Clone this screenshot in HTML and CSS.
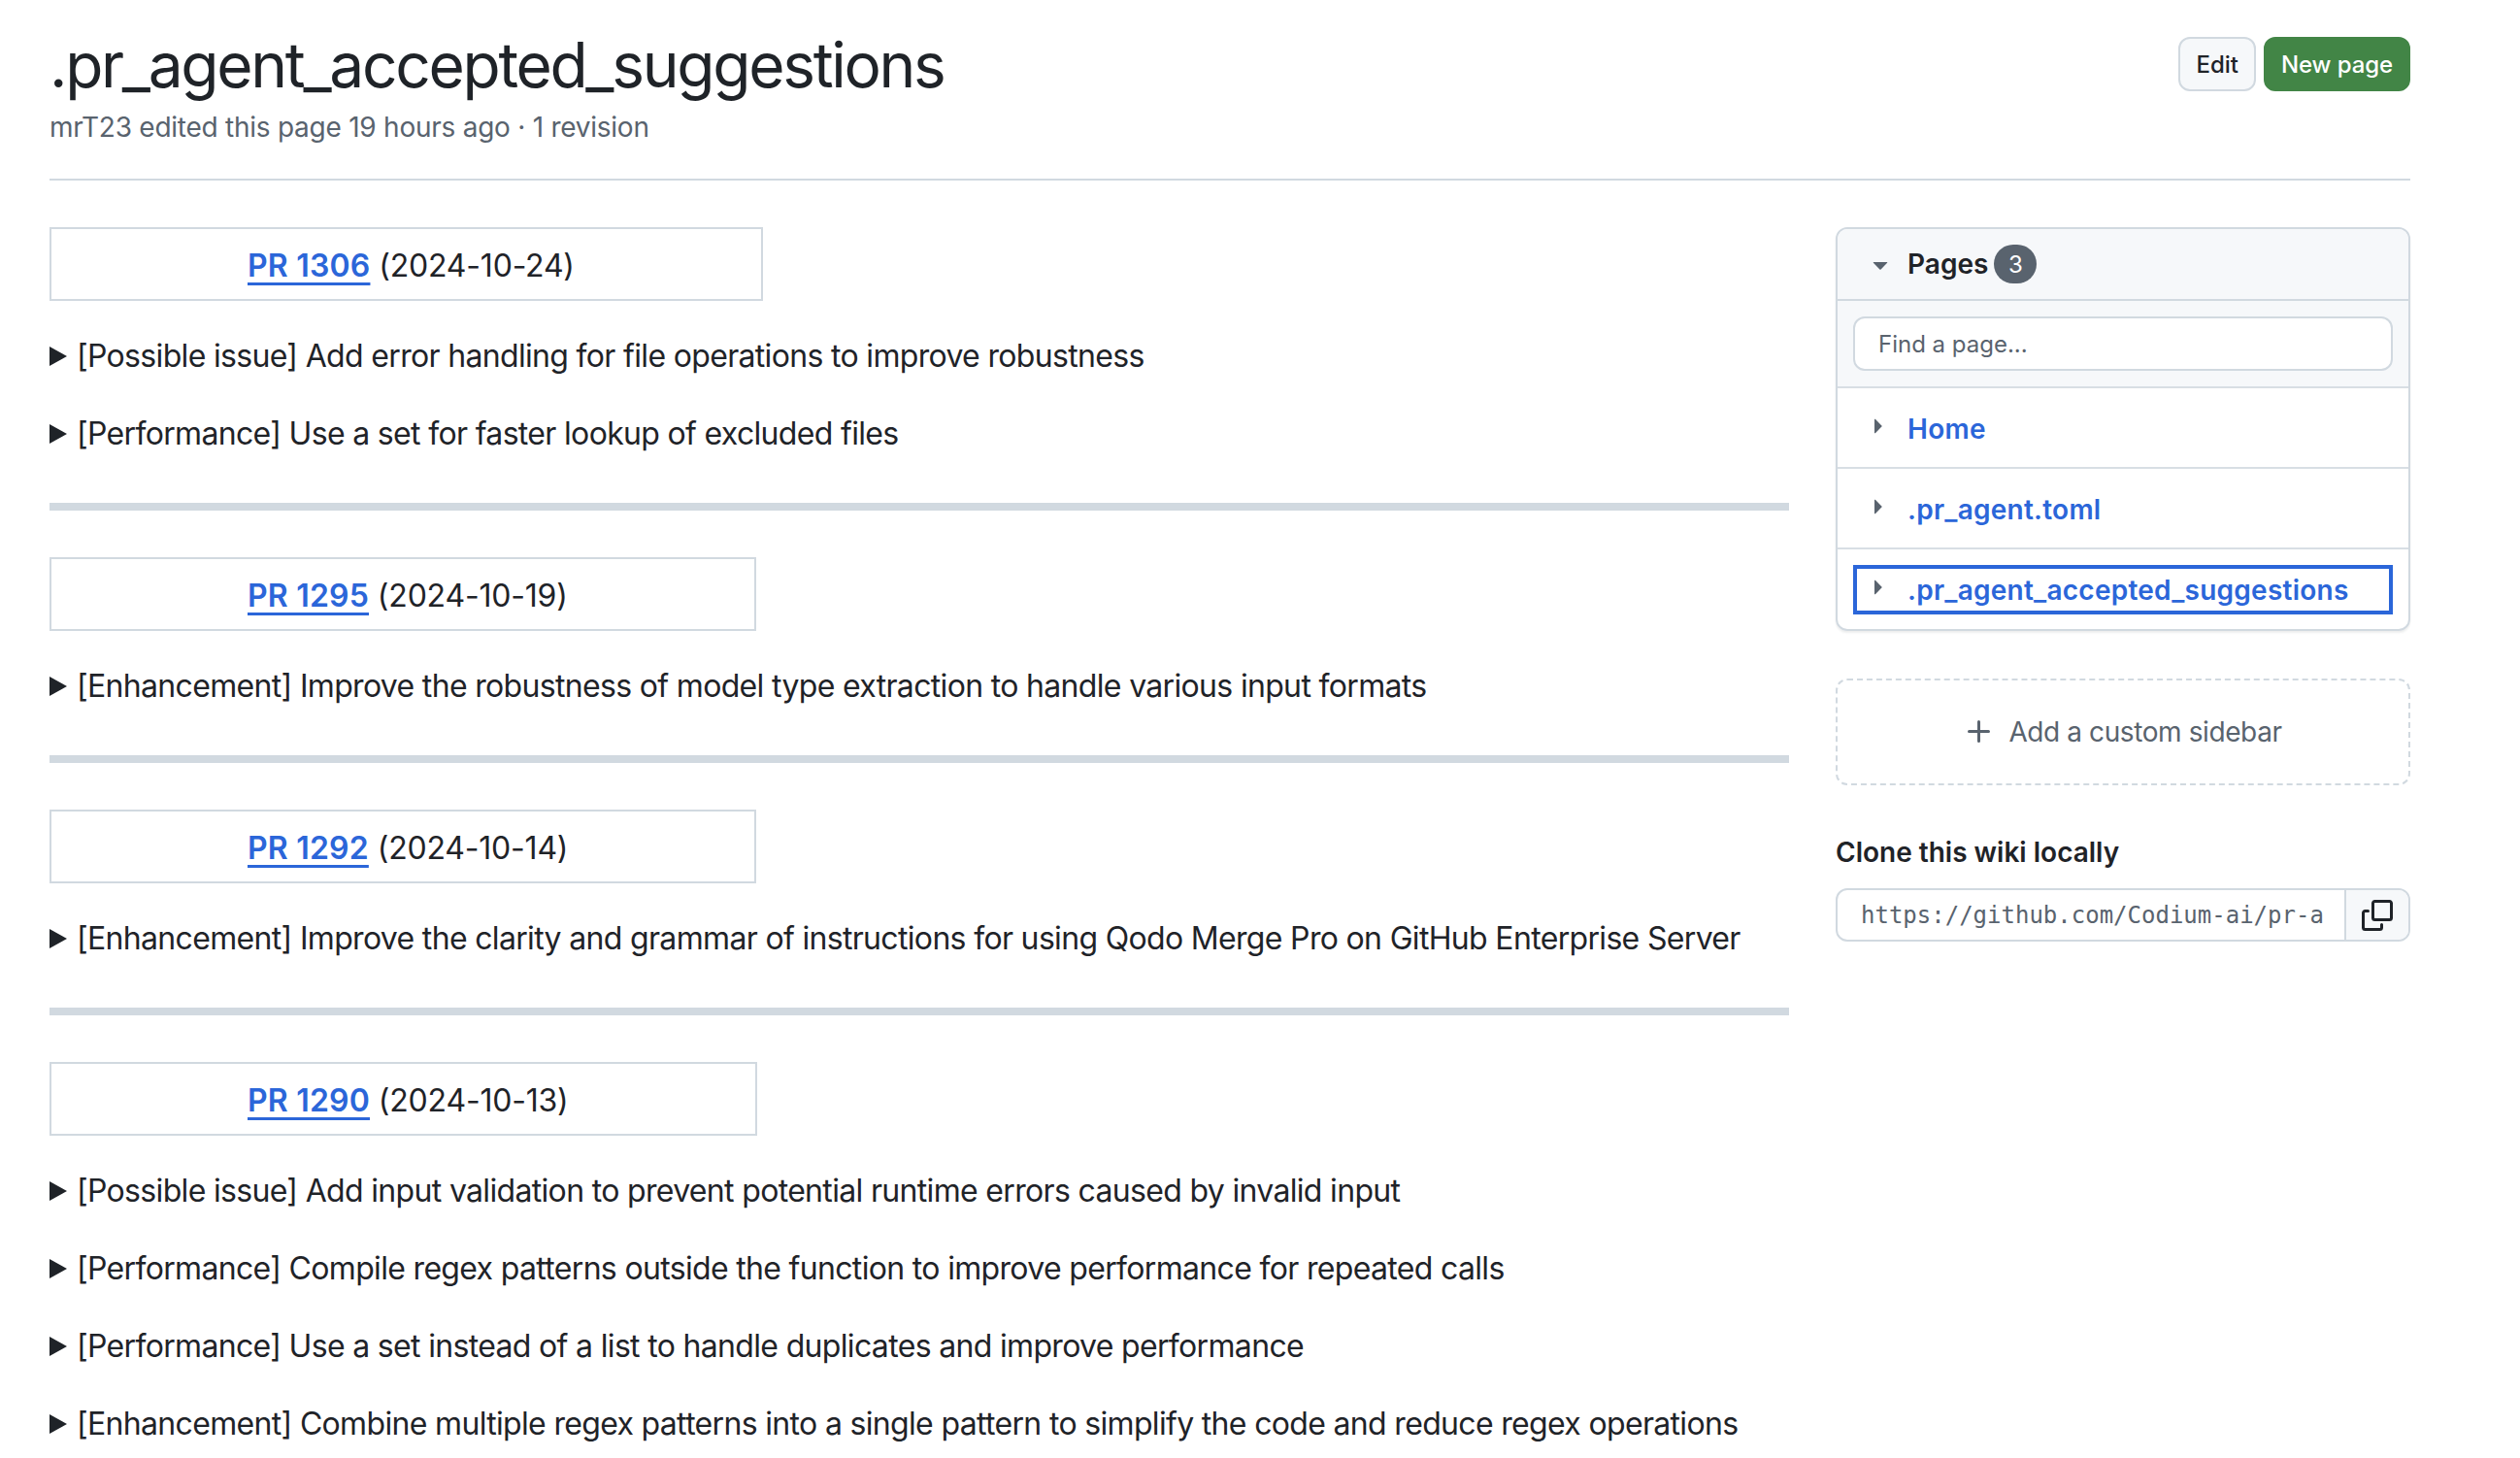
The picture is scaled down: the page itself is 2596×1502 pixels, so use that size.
FILE: index.html
```html
<!DOCTYPE html>
<html lang="en">
<head>
<meta charset="utf-8">
<title>.pr_agent_accepted_suggestions</title>
<link rel="stylesheet" href="styles.css">
</head>
<body>
<div class="page">
  <header class="head">
    <div class="head-text">
      <h1 class="title">.pr_agent_accepted_suggestions</h1>
      <div class="meta">mrT23 edited this page 19 hours ago · 1 revision</div>
    </div>
    <div class="actions">
      <a class="btn">Edit</a>
      <a class="btn btn-green">New page</a>
    </div>
  </header>
  <div class="layout">
    <main class="content">
      <div class="prbox"><a class="prlink">PR 1306</a> (2024-10-24)</div>
      <details class="item"><summary>[Possible issue] Add error handling for file operations to improve robustness</summary></details>
      <details class="item"><summary>[Performance] Use a set for faster lookup of excluded files</summary></details>
      <hr class="rule">
      <div class="prbox"><a class="prlink">PR 1295</a> (2024-10-19)</div>
      <details class="item"><summary>[Enhancement] Improve the robustness of model type extraction to handle various input formats</summary></details>
      <hr class="rule">
      <div class="prbox"><a class="prlink">PR 1292</a> (2024-10-14)</div>
      <details class="item"><summary>[Enhancement] Improve the clarity and grammar of instructions for using Qodo Merge Pro on GitHub Enterprise Server</summary></details>
      <hr class="rule">
      <div class="prbox"><a class="prlink">PR 1290</a> (2024-10-13)</div>
      <details class="item"><summary>[Possible issue] Add input validation to prevent potential runtime errors caused by invalid input</summary></details>
      <details class="item"><summary>[Performance] Compile regex patterns outside the function to improve performance for repeated calls</summary></details>
      <details class="item"><summary>[Performance] Use a set instead of a list to handle duplicates and improve performance</summary></details>
      <details class="item"><summary>[Enhancement] Combine multiple regex patterns into a single pattern to simplify the code and reduce regex operations</summary></details>
    </main>
    <aside class="side">
      <section class="card">
        <div class="card-head">
          <svg class="tri-down" viewBox="0 0 16 16"><path d="m4.427 7.427 3.396 3.396a.25.25 0 0 0 .354 0l3.396-3.396A.25.25 0 0 0 11.396 7H4.604a.25.25 0 0 0-.177.427Z"/></svg>
          <span class="card-title">Pages</span>
          <span class="badge">3</span>
        </div>
        <div class="filter"><div class="find">Find a page...</div></div>
        <div class="row">
          <svg class="tri" viewBox="0 0 16 16"><path d="m6.427 4.427 3.396 3.396a.25.25 0 0 1 0 .354l-3.396 3.396A.25.25 0 0 1 6 11.396V4.604a.25.25 0 0 1 .427-.177Z"/></svg>
          <a class="row-link">Home</a>
        </div>
        <div class="row">
          <svg class="tri" viewBox="0 0 16 16"><path d="m6.427 4.427 3.396 3.396a.25.25 0 0 1 0 .354l-3.396 3.396A.25.25 0 0 1 6 11.396V4.604a.25.25 0 0 1 .427-.177Z"/></svg>
          <a class="row-link">.pr_agent.toml</a>
        </div>
        <div class="row-last">
          <div class="row-focus">
            <svg class="tri" viewBox="0 0 16 16"><path d="m6.427 4.427 3.396 3.396a.25.25 0 0 1 0 .354l-3.396 3.396A.25.25 0 0 1 6 11.396V4.604a.25.25 0 0 1 .427-.177Z"/></svg>
            <a class="row-link">.pr_agent_accepted_suggestions</a>
          </div>
        </div>
      </section>
      <div class="add">
        <svg class="plus" viewBox="0 0 16 16"><path d="M7.75 2a.75.75 0 0 1 .75.75V7h4.25a.75.75 0 0 1 0 1.5H8.5v4.25a.75.75 0 0 1-1.5 0V8.5H2.75a.75.75 0 0 1 0-1.5H7V2.75A.75.75 0 0 1 7.75 2Z"/></svg>
        <span class="add-text">Add a custom sidebar</span>
      </div>
      <h3 class="clone-title">Clone this wiki locally</h3>
      <div class="clone">
        <div class="clone-url"><span class="clone-text">https://github.com/Codium-ai/pr-a</span></div>
        <div class="clone-copy">
          <svg class="copy" viewBox="0 0 16 16"><path d="M0 6.75C0 5.784.784 5 1.75 5h1.5a.75.75 0 0 1 0 1.5h-1.5a.25.25 0 0 0-.25.25v7.5c0 .138.112.25.25.25h7.5a.25.25 0 0 0 .25-.25v-1.5a.75.75 0 0 1 1.5 0v1.5A1.75 1.75 0 0 1 9.25 16h-7.5A1.75 1.75 0 0 1 0 14.25Z"/><path d="M5 1.75C5 .784 5.784 0 6.75 0h7.5C15.216 0 16 .784 16 1.75v7.5A1.75 1.75 0 0 1 14.25 11h-7.5A1.75 1.75 0 0 1 5 9.25Zm1.75-.25a.25.25 0 0 0-.25.25v7.5c0 .138.112.25.25.25h7.5a.25.25 0 0 0 .25-.25v-7.5a.25.25 0 0 0-.25-.25Z"/></svg>
        </div>
      </div>
    </aside>
  </div>
</div>
</body>
</html>
```
FILE: styles.css
```css
* { box-sizing: border-box; }
html, body { margin: 0; padding: 0; background: #fff; }
body { font-family: Inter, "Liberation Sans", sans-serif; color: #1f2328; overflow: hidden; height: 1502px; }
.page { width: 2432px; margin-left: 51px; }
.head { display: flex; justify-content: space-between; align-items: flex-start; padding-top: 27px; height: 186px; border-bottom: 2px solid #d1d9e0; }
.title { margin: 0; font-size: 64px; line-height: 80px; font-weight: 400; letter-spacing: -2.3px; }
.meta { margin-top: 3px; font-size: 28px; line-height: 42px; color: #59636e; letter-spacing: -0.25px; }
.actions { display: flex; gap: 8px; margin-top: 11px; }
.btn { height: 56px; padding: 0 16px; display: flex; align-items: center; font-size: 24px; font-weight: 500; border: 2px solid #d1d9e0; border-radius: 12px; background: #f6f8fa; }
.btn-green { background: #428546; border-color: #428546; color: #fff; letter-spacing: -0.1px; }
.layout { display: flex; gap: 48px; padding-top: 48px; }
.content { width: 1792px; font-size: 32px; line-height: 48px; }
.prbox { display: table; border: 2px solid #d1d9e0; padding: 14px 192px 10px 202px; height: 76px; letter-spacing: -0.2px; }
.prlink { color: #2b66d9; font-weight: 600; letter-spacing: 0.2px; text-decoration: underline; text-underline-offset: 6px; text-decoration-thickness: 3px; }
.item { margin-top: 33px; margin-bottom: -1px; letter-spacing: -0.67px; }
.item summary { cursor: pointer; list-style: none; display: flex; align-items: center; white-space: nowrap; }
.item summary::before { content: ""; flex: none; margin-right: 10px; border-left: 18px solid #1f2328; border-top: 10px solid transparent; border-bottom: 10px solid transparent; }
.rule { height: 8px; border: 0; margin: 48px 0; background: #d1d9e0; }
.side { width: 592px; }
.card { border: 2px solid #d1d9e0; border-radius: 12px; box-shadow: 0 2px 2px rgba(31,35,40,.08); height: 416px; overflow: hidden; }
.card-head { height: 74px; display: flex; align-items: center; padding-left: 36px; background: #f6f8fa; border-bottom: 2px solid #d1d9e0; }
.tri-down { width: 32px; height: 32px; fill: #59636e; margin-right: 12px; margin-left: -8px; }
.card-title { font-size: 28px; font-weight: 600; }
.badge { width: 44px; height: 40px; margin-left: 6px; border-radius: 20px; background: #59636e; color: #fff; font-size: 24px; display: flex; align-items: center; justify-content: center; }
.filter { height: 90px; padding: 16px; background: #f6f8fa; border-bottom: 2px solid #d8dee4; }
.find { height: 56px; border: 2px solid #d1d9e0; border-radius: 12px; background: #fff; padding-left: 24px; display: flex; align-items: center; font-size: 24px; color: #59636e; }
.row { height: 83px; display: flex; align-items: center; padding: 2px 0 0 36px; border-bottom: 2px solid #d8dee4; }
.row-last { padding: 16px 16px 0; }
.row-focus { height: 51px; display: flex; align-items: center; padding-left: 16px; border: 4px solid #2b66d9; }
.tri { width: 32px; height: 32px; fill: #59636e; margin-left: -10px; margin-right: 14px; margin-top: -5px; flex: none; }
.row-link { font-size: 28px; font-weight: 600; color: #2b66d9; letter-spacing: 0.25px; }
.add { margin-top: 49px; height: 110px; border: 2px dashed #d1d9e0; border-radius: 12px; display: flex; align-items: center; justify-content: center; gap: 14px; font-size: 28px; color: #59636e; }
.add-text { letter-spacing: -0.4px; }
.plus { width: 32px; height: 32px; fill: #59636e; }
.clone-title { margin: 48px 0 0; font-size: 28px; line-height: 42px; font-weight: 600; }
.clone { margin-top: 16px; height: 55px; display: flex; border: 2px solid #d1d9e0; border-radius: 12px; overflow: hidden; }
.clone-url { width: 522px; flex: none; padding: 0 24px; display: flex; align-items: center; }
.clone-text { font-family: "DejaVu Sans Mono", monospace; font-size: 24px; color: #59636e; white-space: nowrap; }
.clone-copy { flex: 1; background: #f6f8fa; border-left: 2px solid #d1d9e0; display: flex; align-items: center; justify-content: center; }
.copy { width: 32px; height: 32px; fill: #1f2328; }
```
